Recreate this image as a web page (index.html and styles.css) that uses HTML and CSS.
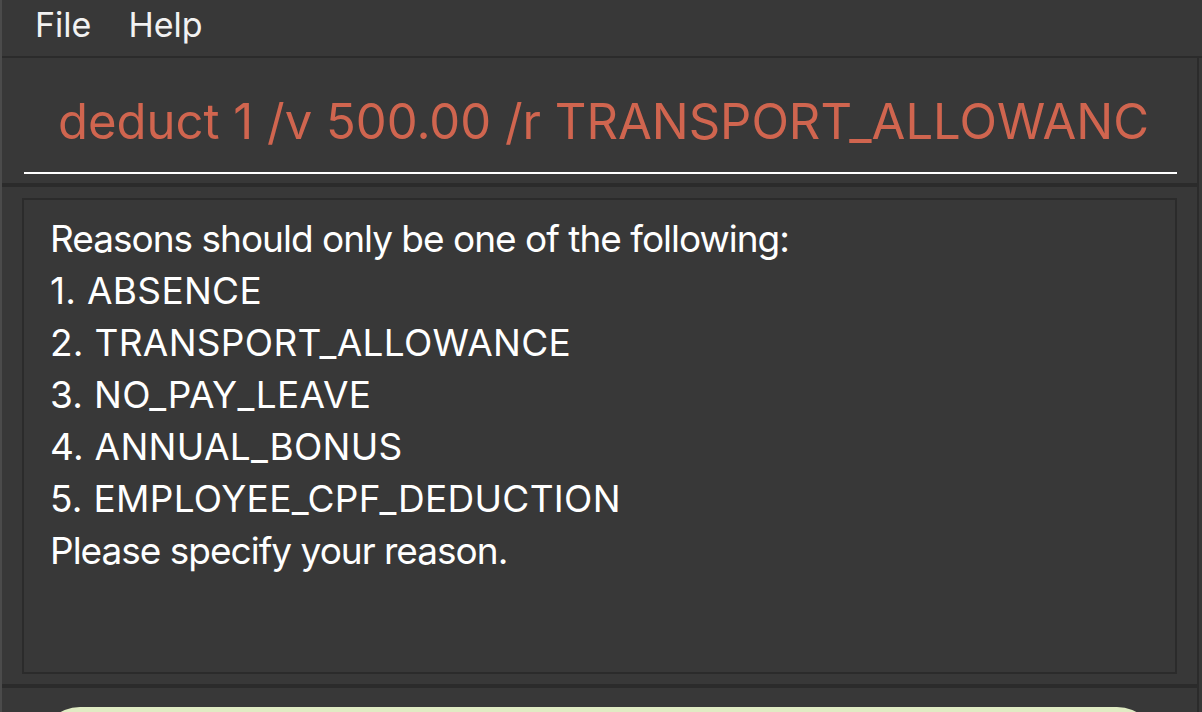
FILE: index.html
```html
<!DOCTYPE html>
<html>
<head>
<meta charset="utf-8">
<link rel="stylesheet" href="styles.css">
</head>
<body>
<div class="app">
  <nav class="menubar">
    <span class="menu-item">File</span>
    <span class="menu-item">Help</span>
  </nav>
  <div class="sep thin"></div>
  <section class="panel command-panel">
    <div class="command-input">deduct 1 /v 500.00 /r TRANSPORT_ALLOWANC</div>
  </section>
  <div class="sep"></div>
  <section class="panel result-panel">
    <div class="result-box">
      <p class="msg">Reasons should only be one of the following:</p>
      <p class="reason">1. ABSENCE</p>
      <p class="reason">2. TRANSPORT_ALLOWANCE</p>
      <p class="reason">3. NO_PAY_LEAVE</p>
      <p class="reason">4. ANNUAL_BONUS</p>
      <p class="reason">5. EMPLOYEE_CPF_DEDUCTION</p>
      <p class="msg">Please specify your reason.</p>
    </div>
  </section>
  <div class="sep"></div>
  <section class="panel list-panel">
    <div class="card"></div>
  </section>
</div>
</body>
</html>
```

FILE: styles.css
```css
html, body {
  margin: 0;
  padding: 0;
  background: #383838;
  overflow: hidden;
}
.app {
  width: 1200px;
  height: 712px;
  border-left: 2px solid #4b4b4b;
  display: flex;
  flex-direction: column;
  font-family: Inter, "Noto Sans", sans-serif;
  color: #ffffff;
  overflow: hidden;
}
.app > * {
  flex-shrink: 0;
}
.menubar {
  height: 56px;
  display: flex;
  align-items: center;
  padding-left: 33px;
  gap: 37px;
  box-sizing: border-box;
  padding-bottom: 8px;
}
.menu-item {
  font-size: 34px;
  color: #f2f2f2;
}
.sep {
  height: 4px;
  background: #2b2b2b;
  margin-right: 3px;
}
.sep.thin {
  height: 2px;
  margin-right: 0;
}
.panel {
  margin-right: 3px;
  border-right: 2px solid #2b2b2b;
}
.command-panel {
  height: 125px;
  padding: 0 20px 9px 22px;
  box-sizing: border-box;
  display: flex;
  align-items: flex-end;
}
.command-input {
  flex: 1;
  height: 100px;
  border-bottom: 2px solid #ffffff;
  color: #d0654f;
  font-size: 49px;
  padding-left: 34px;
  box-sizing: border-box;
  line-height: 96px;
  white-space: nowrap;
  overflow: hidden;
}
.result-panel {
  height: 497px;
  padding: 11px 20px 10px 20px;
  box-sizing: border-box;
  display: flex;
}
.result-box {
  flex: 1;
  border: 2px solid #2b2b2b;
  padding: 13px 0 0 26px;
  font-size: 37px;
  line-height: 52px;
  color: #ffffff;
}
.result-box p {
  margin: 0;
}
.result-box .msg {
  letter-spacing: -1px;
}
.result-box .reason {
  letter-spacing: 0.3px;
}
.list-panel {
  flex: 1;
  padding: 19px 0 0 38px;
}
.card {
  width: 1117px;
  height: 60px;
  background: #e0ebc3;
  border-radius: 40px 40px 0 0;
}
```
